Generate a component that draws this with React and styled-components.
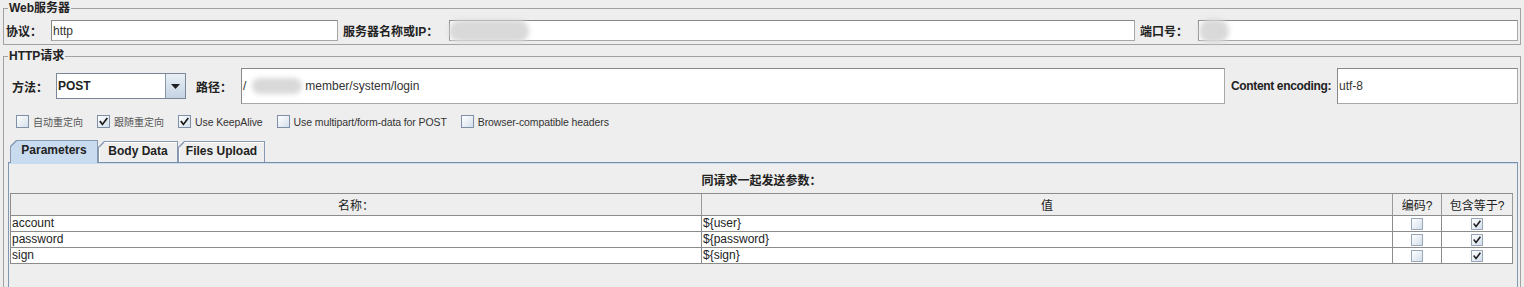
import React from 'react';
import styled, { createGlobalStyle } from 'styled-components';

const GlobalStyle = createGlobalStyle`
  html, body { margin: 0; padding: 0; background: #eeeeee; }
  body {
    font-family: "Liberation Sans", "Noto Sans CJK SC", sans-serif;
    font-size: 12px;
    color: #222;
  }
`;

const Screen = styled.div`
  width: 1524px;
  height: 287px;
  overflow: hidden;
  box-sizing: border-box;
  padding: 1px 3px 0 3px;
  background: #eeeeee;
`;

const Group = styled.fieldset`
  margin: ${(p) => p.$top}px 0 0 0;
  padding: ${(p) => p.$pad};
  border: 1px solid #a2a2a2;
  min-width: 0;
  box-sizing: border-box;
`;

const Legend = styled.legend`
  margin-left: ${(p) => p.$indent}px;
  padding: 0 1px;
  font-weight: bold;
  font-size: 12px;
  line-height: 14px;
  color: #222;
`;

const Row = styled.div`
  display: flex;
  align-items: center;
  height: ${(p) => p.$h}px;
  padding-left: ${(p) => p.$indent || 0}px;
`;

const Label = styled.span`
  flex: none;
  box-sizing: border-box;
  width: ${(p) => p.$w}px;
  margin-left: ${(p) => p.$lead || 0}px;
  font-weight: bold;
  font-size: 12px;
  letter-spacing: ${(p) => p.$tight || 0}px;
  color: #222;
  white-space: nowrap;
`;

const Field = styled.div`
  box-sizing: border-box;
  height: ${(p) => p.$h}px;
  ${(p) => (p.$w ? `width: ${p.$w}px; flex: none;` : 'flex: 1; min-width: 0;')}
  border: 1px solid #888;
  border-right-color: #a8a8a8;
  border-bottom-color: #a8a8a8;
  background: #fff;
  display: flex;
  align-items: center;
  padding-left: 1px;
  font-size: 12px;
  color: #333;
  white-space: nowrap;
`;

const Blob = styled.span`
  display: inline-block;
  flex: none;
  width: ${(p) => p.$w}px;
  height: ${(p) => p.$h}px;
  margin-left: ${(p) => p.$ml || 0}px;
  margin-right: ${(p) => p.$mr || 0}px;
  border-radius: ${(p) => p.$r || 8}px;
  background: #d9d9d9;
  filter: blur(2.5px);
`;

const Combo = styled.div`
  box-sizing: border-box;
  flex: none;
  width: 130px;
  height: 26px;
  display: flex;
  border: 1px solid #7b8799;
  background: #fff;
`;

const ComboText = styled.div`
  flex: 1;
  display: flex;
  align-items: center;
  padding-left: 1px;
  font-weight: bold;
  font-size: 12px;
  color: #222;
`;

const ComboButton = styled.div`
  width: 19px;
  border-left: 1px solid #8a97a8;
  background: linear-gradient(#e8eff6, #c4d3e3);
  display: flex;
  align-items: center;
  justify-content: center;
`;

const OptionRow = styled.div`
  display: flex;
  align-items: center;
  gap: 14px;
  height: 19px;
  margin-top: 8px;
  padding-left: 8px;
`;

const Option = styled.label`
  display: flex;
  align-items: center;
  gap: 4px;
`;

const OptionText = styled.span`
  font-size: ${(p) => (p.$cjk ? 10 : 10.5)}px;
  letter-spacing: ${(p) => (p.$cjk ? 0 : -0.1)}px;
  color: ${(p) => (p.$cjk ? '#555' : '#333')};
  white-space: nowrap;
`;

const Box = styled.span`
  box-sizing: border-box;
  flex: none;
  width: ${(p) => p.$size}px;
  height: ${(p) => p.$size}px;
  border: 1px solid ${(p) => (p.$small ? '#9aa6b6' : '#7f90a6')};
  background: linear-gradient(135deg, #ffffff 0%, #d3dfeb 100%);
  display: inline-flex;
  align-items: center;
  justify-content: center;
`;

const TabStrip = styled.div`
  display: flex;
  align-items: flex-end;
  height: 22px;
  margin-top: 9px;
  padding-left: 2px;
`;

const Tab = styled.div`
  position: relative;
  z-index: ${(p) => (p.$active ? 1 : 0)};
  box-sizing: border-box;
  flex: none;
  width: ${(p) => p.$w}px;
  height: ${(p) => (p.$active ? 23 : 21)}px;
  margin-bottom: ${(p) => (p.$active ? -1 : 0)}px;
  padding: 1px 1px 0 1px;
  background: #8799b1;
  clip-path: polygon(6px 0, 100% 0, 100% 100%, 0 100%, 0 6px);
`;

const TabFace = styled.div`
  height: 100%;
  background: ${(p) => (p.$active ? '#c9dbee' : '#eeeeee')};
  box-shadow: ${(p) => (p.$active ? 'none' : 'inset 1px 1px 0 #ffffff')};
  clip-path: polygon(6px 0, 100% 0, 100% 100%, 0 100%, 0 6px);
  display: flex;
  align-items: center;
  justify-content: center;
  padding-bottom: ${(p) => (p.$active ? 4 : 2)}px;
  box-sizing: border-box;
  font-weight: bold;
  font-size: 12px;
  color: #222;
`;

const Panel = styled.div`
  box-sizing: border-box;
  min-height: 140px;
  border: 1px solid #8297b1;
  border-top-color: #7b8fa8;
  box-shadow: inset 0 1px 0 #c9dbee;
  padding: 11px 4px 0 1px;
`;

const PanelTitle = styled.div`
  text-align: center;
  font-weight: bold;
  font-size: 12px;
  line-height: 14px;
  margin-bottom: 5px;
  color: #222;
`;

const Table = styled.div`
  display: grid;
  grid-template-columns: 1fr 1fr 49px 71px;
  border-top: 1px solid #8c8c8c;
  border-left: 1px solid #8c8c8c;
`;

const HeadCell = styled.div`
  height: 21px;
  border-right: 1px solid #9a9a9a;
  border-bottom: 1px solid #8c8c8c;
  background: #eeeeee;
  display: flex;
  align-items: center;
  justify-content: center;
  font-size: 12px;
  color: #222;
  white-space: nowrap;
`;

const Cell = styled.div`
  height: 15px;
  border-right: 1px solid #8c8c8c;
  border-bottom: 1px solid #8c8c8c;
  background: #fff;
  display: flex;
  align-items: center;
  justify-content: ${(p) => (p.$center ? 'center' : 'flex-start')};
  padding-left: ${(p) => (p.$center ? 0 : 1)}px;
  font-size: 12px;
  line-height: 15px;
  color: #222;
  white-space: nowrap;
`;

const Check = ({ size = 13 }) => (
  <svg width={size - 4} height={size - 4} viewBox="0 0 9 9">
    <path d="M1.3 4.6 L3.4 7.4 L7.8 1.6" fill="none" stroke="#1b1b1b" strokeWidth="1.7" strokeLinecap="square" />
  </svg>
);

const CheckBox = ({ checked, size = 13, small }) => (
  <Box $size={size} $small={small}>{checked && <Check size={size} />}</Box>
);

const options = [
  { text: '自动重定向', cjk: true, checked: false },
  { text: '跟随重定向', cjk: true, checked: true },
  { text: 'Use KeepAlive', checked: true },
  { text: 'Use multipart/form-data for POST', checked: false },
  { text: 'Browser-compatible headers', checked: false },
];

const params = [
  { name: 'account', value: '${user}' },
  { name: 'password', value: '${password}' },
  { name: 'sign', value: '${sign}' },
];

export default function App() {
  return (
    <>
      <GlobalStyle />
      <Screen>
        <Group $top={0} $pad="5px 2px 3px 2px">
          <Legend $indent={2}>Web服务器</Legend>
          <Row $h={21}>
            <Label $w={45}>协议：</Label>
            <Field $h={21} $w={287}>http</Field>
            <Label $w={106} $lead={5}>服务器名称或IP：</Label>
            <Field $h={21}>
              <Blob $w={80} $h={22} $ml={-2} $r={10} />
            </Field>
            <Label $w={58} $lead={5}>端口号：</Label>
            <Field $h={21} $w={320}>
              <Blob $w={30} $h={24} $ml={-1} $r={14} />
            </Field>
          </Row>
        </Group>

        <Group $top={4} $pad="5px 2px 10px 4px">
          <Legend $indent={0}>HTTP请求</Legend>
          <Row $h={36} $indent={4}>
            <Label $w={44}>方法：</Label>
            <Combo>
              <ComboText>POST</ComboText>
              <ComboButton>
                <svg width="9" height="5" viewBox="0 0 9 5">
                  <polygon points="0,0 9,0 4.5,5" fill="#1e1e1e" />
                </svg>
              </ComboButton>
            </Combo>
            <Label $w={45} $lead={10}>路径：</Label>
            <Field $h={36}>
              /<Blob $w={50} $h={16} $ml={6} $mr={3} />member/system/login
            </Field>
            <Label $w={106} $lead={6} $tight={-0.35}>Content encoding:</Label>
            <Field $h={36} $w={181}>utf-8</Field>
          </Row>

          <OptionRow>
            {options.map((o) => (
              <Option key={o.text}>
                <CheckBox checked={o.checked} />
                <OptionText $cjk={o.cjk}>{o.text}</OptionText>
              </Option>
            ))}
          </OptionRow>

          <TabStrip>
            <Tab $w={88} $active>
              <TabFace $active>Parameters</TabFace>
            </Tab>
            <Tab $w={80}>
              <TabFace>Body Data</TabFace>
            </Tab>
            <Tab $w={87}>
              <TabFace>Files Upload</TabFace>
            </Tab>
          </TabStrip>

          <Panel>
            <PanelTitle>同请求一起发送参数：</PanelTitle>
            <Table>
              <HeadCell>名称：</HeadCell>
              <HeadCell>值</HeadCell>
              <HeadCell>编码?</HeadCell>
              <HeadCell>包含等于?</HeadCell>
              {params.map((p) => (
                <React.Fragment key={p.name}>
                  <Cell>{p.name}</Cell>
                  <Cell>{p.value}</Cell>
                  <Cell $center>
                    <CheckBox size={12} small />
                  </Cell>
                  <Cell $center>
                    <CheckBox size={12} small checked />
                  </Cell>
                </React.Fragment>
              ))}
            </Table>
          </Panel>
        </Group>
      </Screen>
    </>
  );
}
